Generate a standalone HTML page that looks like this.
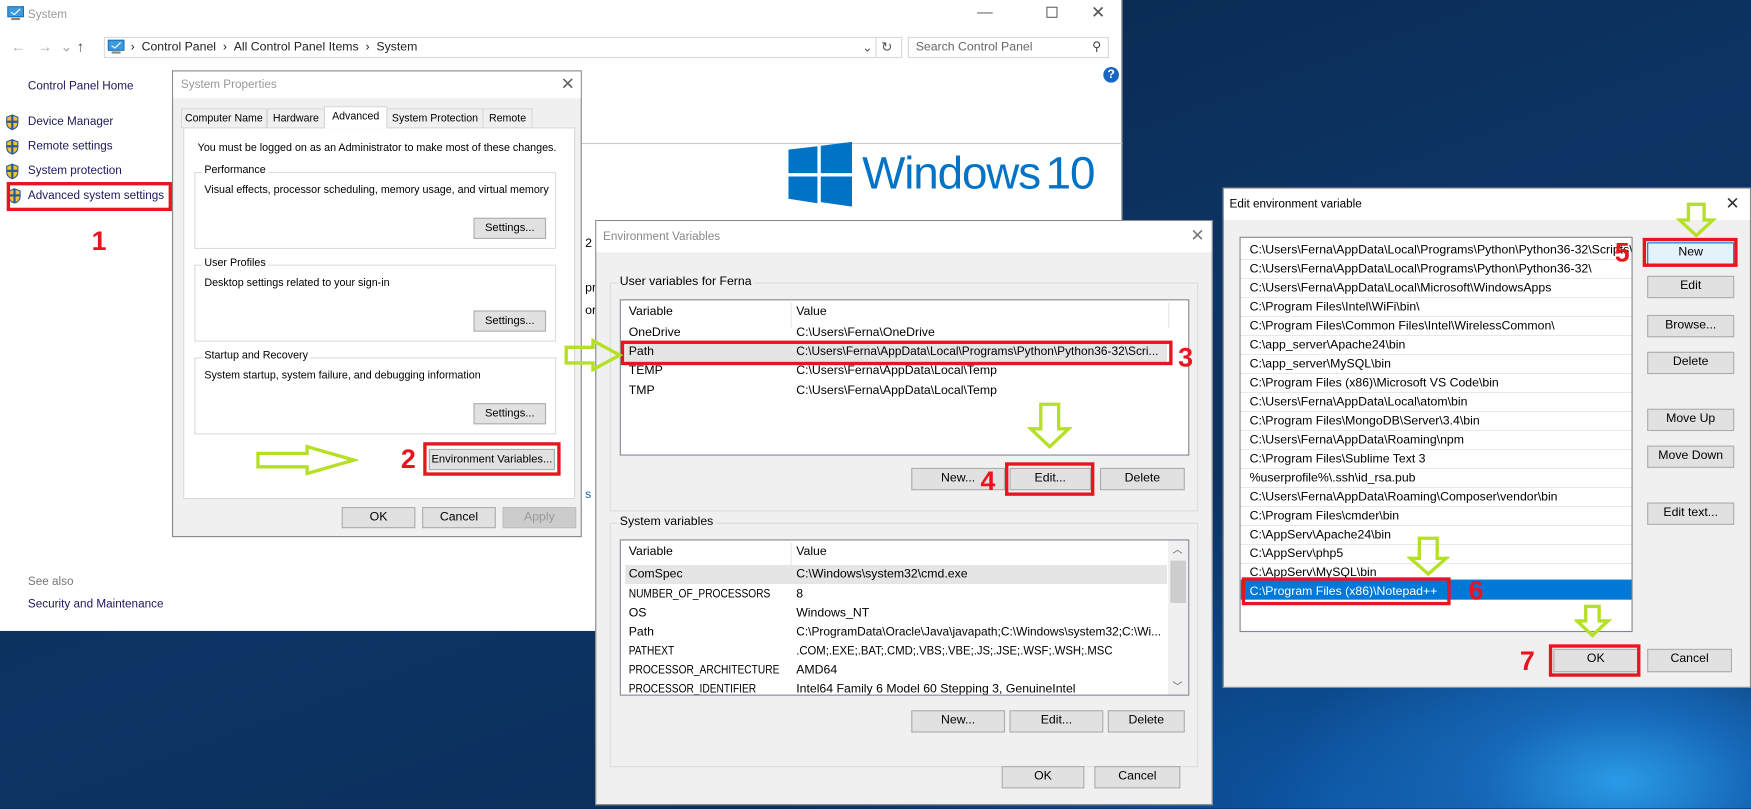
<!DOCTYPE html>
<html><head><meta charset="utf-8"><style>
*{margin:0;padding:0;box-sizing:border-box}
html,body{width:1751px;height:809px;overflow:hidden;background:#0b2a52}
#s{position:absolute;left:0;top:0;width:1568px;height:724px;transform:scale(1.11671);transform-origin:0 0;font-family:"Liberation Sans",sans-serif;font-size:11px;color:#000;
background:radial-gradient(ellipse 300px 160px at 1450px 700px,#2a9be8 0%,#1668b8 40%,rgba(11,42,82,0) 100%),radial-gradient(ellipse 500px 300px at 1200px 720px,#0d57a6 0%,rgba(11,42,82,0) 100%),linear-gradient(160deg,#0a2140 0%,#0c3464 50%,#0a2a55 100%)}
.a{position:absolute;white-space:nowrap}
.btn{position:absolute;background:#e1e1e1;border:1px solid #adadad;text-align:center;line-height:17px;font-size:11px;white-space:nowrap}
.sp .btn,.sp{font-size:10px}
.red{position:absolute;border:3px solid #e8141e}
.num{position:absolute;color:#e8141e;font-weight:bold;font-size:24px;line-height:24px}
.grp{position:absolute;border:1px solid #dcdcdc}
.grp>.l{position:absolute;top:-8px;left:6px;background:inherit;padding:0 2px}
.list{position:absolute;background:#fff;border:1px solid #828790}
.row{position:absolute;left:0;height:17px;line-height:17px;white-space:nowrap}
.c{display:inline-block;transform:scaleX(.83);transform-origin:left}
.x{position:absolute;font-size:15px;color:#555;line-height:15px}
.tab{position:absolute;height:18px;border:1px solid #d9d9d9;background:#f0f0f0;padding:3px 0;text-align:center;font-size:9.5px;white-space:nowrap}
</style></head><body><div id="s">

<!-- System window -->
<div class="a" style="left:0;top:0;width:1005px;height:565px;background:#fff;border-right:1px solid #999"></div>
<svg class="a" style="left:6px;top:5px" width="16" height="14"><rect x="1" y="1" width="14" height="9" fill="#3c9be0" stroke="#1b6fb5"/><path d="M4 6l3 2 5-5" stroke="#fff" fill="none"/><rect x="4" y="11" width="8" height="2" fill="#888"/></svg>
<div class="a" style="left:25px;top:7px;color:#999;font-size:10.5px">System</div>
<div class="a" style="left:875px;top:2px;color:#666;font-size:14px">—</div>
<div class="a" style="left:937px;top:6px;width:10px;height:10px;border:1px solid #666"></div>
<div class="x" style="left:977px;top:4px">✕</div>
<div class="a" style="left:10px;top:34px;color:#aaa;font-size:13px">←&nbsp;&nbsp;&nbsp;→&nbsp;&nbsp;⌄&nbsp;<span style="color:#444">↑</span></div>
<div class="a" style="left:93px;top:33px;width:715px;height:19px;border:1px solid #d9d9d9"></div>
<svg class="a" style="left:96px;top:35px" width="16" height="14"><rect x="1" y="1" width="14" height="9" fill="#3c9be0" stroke="#1b6fb5"/><path d="M4 6l3 2 5-5" stroke="#fff" fill="none"/><rect x="4" y="11" width="8" height="2" fill="#888"/></svg>
<div class="a" style="left:117px;top:36px;color:#222">›&nbsp;&nbsp;Control Panel&nbsp;&nbsp;›&nbsp;&nbsp;All Control Panel Items&nbsp;&nbsp;›&nbsp;&nbsp;System</div>
<div class="a" style="left:772px;top:36px;color:#555">⌄</div>
<div class="a" style="left:784px;top:33px;width:1px;height:19px;background:#d9d9d9"></div>
<div class="a" style="left:789px;top:35px;color:#555;font-size:12px">↻</div>
<div class="a" style="left:813px;top:33px;width:180px;height:19px;border:1px solid #d9d9d9"></div>
<div class="a" style="left:820px;top:36px;color:#666">Search Control Panel</div>
<div class="a" style="left:978px;top:35px;color:#444;font-size:11px">⚲</div>
<div class="a" style="left:988px;top:60px;width:14px;height:14px;border-radius:50%;background:#1a65c0;color:#fff;font-weight:bold;text-align:center;line-height:14px;font-size:11px">?</div>
<div class="a" style="left:25px;top:71px;color:#1a1a5a;font-size:10.5px">Control Panel Home</div>
<div class="a" style="left:25px;top:103px;color:#1a1a5a;font-size:10.5px">Device Manager</div>
<div class="a" style="left:25px;top:125px;color:#1a1a5a;font-size:10.5px">Remote settings</div>
<div class="a" style="left:25px;top:147px;color:#1a1a5a;font-size:10.5px">System protection</div>
<div class="a" style="left:25px;top:169px;color:#1a1a5a;font-size:10.5px">Advanced system settings</div>
<svg class="a" style="left:5px;top:102px" width="14" height="80"><g><path d="M6 1l5 2v5c0 3-2 5-5 6c-3-1-5-3-5-6V3z" fill="#f5c232" stroke="#2b5a9c"/><path d="M6 1v13M1 7h10" stroke="#2b5a9c" stroke-width="2"/></g><g transform="translate(0,22)"><path d="M6 1l5 2v5c0 3-2 5-5 6c-3-1-5-3-5-6V3z" fill="#f5c232" stroke="#2b5a9c"/><path d="M6 1v13M1 7h10" stroke="#2b5a9c" stroke-width="2"/></g><g transform="translate(0,44)"><path d="M6 1l5 2v5c0 3-2 5-5 6c-3-1-5-3-5-6V3z" fill="#f5c232" stroke="#2b5a9c"/><path d="M6 1v13M1 7h10" stroke="#2b5a9c" stroke-width="2"/></g><g transform="translate(2,66)"><path d="M6 1l5 2v5c0 3-2 5-5 6c-3-1-5-3-5-6V3z" fill="#f5c232" stroke="#2b5a9c"/><path d="M6 1v13M1 7h10" stroke="#2b5a9c" stroke-width="2"/></g></svg>
<div class="red" style="left:6px;top:163px;width:148px;height:26px"></div>
<div class="num" style="left:82px;top:205px">1</div>
<div class="a" style="left:25px;top:515px;color:#777;font-size:10.5px">See also</div>
<div class="a" style="left:25px;top:535px;color:#1a1a5a;font-size:10.5px">Security and Maintenance</div>
<div class="a" style="left:520px;top:128px;width:485px;height:1px;background:#ccc"></div>
<svg class="a" style="left:706px;top:127px" width="60" height="58"><path d="M0 7l26-3v24H0z M29 3.5L57 0v28H29z M0 31h26v24L0 51z M29 31h28v27l-28-4z" fill="#0173c7"/></svg>
<div class="a" style="left:772px;top:131px;color:#0173c7;font-size:41px;line-height:48px;letter-spacing:-1px">Windows<span style="margin-left:5px">10</span></div>
<div class="a" style="left:524px;top:212px;font-size:11px">2</div>
<div class="a" style="left:524px;top:252px">pr</div>
<div class="a" style="left:524px;top:272px">or</div>
<div class="a" style="left:524px;top:437px;color:#1a65c0">s</div>

<!-- System Properties -->
<div class="sp">
<div class="a" style="left:154px;top:63px;width:367px;height:418px;background:#f0f0f0;border:1px solid #888"></div>
<div class="a" style="left:155px;top:64px;width:365px;height:24px;background:#fff"></div>
<div class="a" style="left:162px;top:70px;color:#999;font-size:10.5px">System Properties</div>
<div class="x" style="left:502px;top:68px;color:#666">✕</div>
<div class="a" style="left:164px;top:114px;width:351px;height:333px;background:#fff;border:1px solid #d9d9d9"></div>
<div class="tab" style="left:162px;top:97px;width:77px">Computer Name</div>
<div class="tab" style="left:239px;top:97px;width:52px">Hardware</div>
<div class="tab" style="left:290px;top:95px;height:20px;width:57px;border-bottom:none;background:#fff">Advanced</div>
<div class="tab" style="left:346px;top:97px;width:87px">System Protection</div>
<div class="tab" style="left:432px;top:97px;width:45px">Remote</div>
<div class="a" style="left:177px;top:127px;font-size:9.6px">You must be logged on as an Administrator to make most of these changes.</div>
<div class="grp" style="left:174px;top:154px;width:324px;height:69px;background:#fff"><span class="l" style="font-size:9.6px">Performance</span></div>
<div class="a" style="left:183px;top:165px;font-size:9.6px">Visual effects, processor scheduling, memory usage, and virtual memory</div>
<div class="btn" style="left:424px;top:195px;width:65px;height:19px">Settings...</div>
<div class="grp" style="left:174px;top:237px;width:324px;height:69px;background:#fff"><span class="l" style="font-size:9.6px">User Profiles</span></div>
<div class="a" style="left:183px;top:248px;font-size:9.6px">Desktop settings related to your sign-in</div>
<div class="btn" style="left:424px;top:278px;width:65px;height:19px">Settings...</div>
<div class="grp" style="left:174px;top:320px;width:324px;height:69px;background:#fff"><span class="l" style="font-size:9.6px">Startup and Recovery</span></div>
<div class="a" style="left:183px;top:331px;font-size:9.6px">System startup, system failure, and debugging information</div>
<div class="btn" style="left:424px;top:361px;width:65px;height:19px">Settings...</div>
<div class="btn" style="left:384px;top:402px;width:113px;height:19px">Environment Variables...</div>
<div class="red" style="left:379px;top:396px;width:123px;height:30px"></div>
<div class="num" style="left:359px;top:400px">2</div>
<svg class="a" style="left:229px;top:398px" width="92" height="28"><path d="M2 8h44V2l42 12-42 12v-6H2z" fill="none" stroke="#b5e026" stroke-width="3"/></svg>
<div class="btn" style="left:306px;top:454px;width:66px;height:19px;font-size:11px">OK</div>
<div class="btn" style="left:378px;top:454px;width:66px;height:19px;font-size:11px">Cancel</div>
<div class="btn" style="left:450px;top:454px;width:66px;height:19px;color:#999;background:#ccc;border-color:#bfbfbf;font-size:11px">Apply</div>
</div>

<!-- Environment Variables -->
<div class="a" style="left:533px;top:197px;width:553px;height:524px;background:#f0f0f0;border:1px solid #888"></div>
<div class="a" style="left:534px;top:198px;width:551px;height:28px;background:#fff"></div>
<div class="a" style="left:540px;top:206px;color:#888;font-size:10.5px">Environment Variables</div>
<div class="x" style="left:1066px;top:204px;color:#777">✕</div>
<div class="grp" style="left:546px;top:253px;width:527px;height:205px;background:#f0f0f0"><span class="l">User variables for Ferna</span></div>
<div class="list" style="left:555px;top:268px;width:510px;height:140px">
 <div class="a" style="left:152px;top:2px;width:1px;height:23px;background:#e5e5e5"></div>
 <div class="a" style="left:490px;top:2px;width:1px;height:23px;background:#e5e5e5"></div>
 <div class="row" style="top:2px;left:7px">Variable</div><div class="row" style="top:2px;left:157px">Value</div>
 <div class="row" style="top:21px;left:7px">OneDrive</div><div class="row" style="top:21px;left:157px">C:\Users\Ferna\OneDrive</div>
 <div class="row" style="top:38px;left:4px;width:485px;background:#e5e5e5"></div>
 <div class="row" style="top:38px;left:7px">Path</div><div class="row" style="top:38px;left:157px"><span class="c" style="transform:scaleX(.97)">C:\Users\Ferna\AppData\Local\Programs\Python\Python36-32\Scri...</span></div>
 <div class="row" style="top:55px;left:7px">TEMP</div><div class="row" style="top:55px;left:157px">C:\Users\Ferna\AppData\Local\Temp</div>
 <div class="row" style="top:73px;left:7px">TMP</div><div class="row" style="top:73px;left:157px">C:\Users\Ferna\AppData\Local\Temp</div>
</div>
<div class="red" style="left:556px;top:305px;width:494px;height:22px"></div>
<div class="num" style="left:1055px;top:309px">3</div>
<svg class="a" style="left:505px;top:303px" width="54" height="30"><path d="M2 8h24V2l24 13-24 13v-6H2z" fill="none" stroke="#b5e026" stroke-width="3"/></svg>
<svg class="a" style="left:920px;top:360px" width="40" height="42"><path d="M12 2h16v22h9L20 40 3 24h9z" fill="none" stroke="#b5e026" stroke-width="3"/></svg>
<div class="btn" style="left:816px;top:419px;width:84px;height:20px">New...</div>
<div class="btn" style="left:904px;top:419px;width:73px;height:20px">Edit...</div>
<div class="red" style="left:900px;top:414px;width:80px;height:30px"></div>
<div class="num" style="left:878px;top:420px">4</div>
<div class="btn" style="left:985px;top:419px;width:76px;height:20px">Delete</div>
<div class="grp" style="left:546px;top:468px;width:527px;height:219px;background:#f0f0f0"><span class="l">System variables</span></div>
<div class="list" style="left:555px;top:483px;width:510px;height:140px;overflow:hidden">
 <div class="a" style="left:152px;top:2px;width:1px;height:23px;background:#e5e5e5"></div>
 <div class="a" style="left:490px;top:0;width:18px;height:138px;background:#f0f0f0"></div>
 <div class="a" style="left:492px;top:18px;width:14px;height:38px;background:#cdcdcd"></div>
 <div class="a" style="left:494px;top:1px;color:#555;font-size:9px">︿</div>
 <div class="a" style="left:494px;top:124px;color:#555;font-size:9px">﹀</div>
 <div class="row" style="top:2px;left:7px">Variable</div><div class="row" style="top:2px;left:157px">Value</div>
 <div class="row" style="top:22px;left:4px;width:485px;background:#e5e5e5"></div>
 <div class="row" style="top:22px;left:7px">ComSpec</div><div class="row" style="top:22px;left:157px">C:\Windows\system32\cmd.exe</div>
 <div class="row" style="top:40px;left:7px"><span class="c">NUMBER_OF_PROCESSORS</span></div><div class="row" style="top:40px;left:157px">8</div>
 <div class="row" style="top:57px;left:7px">OS</div><div class="row" style="top:57px;left:157px">Windows_NT</div>
 <div class="row" style="top:74px;left:7px">Path</div><div class="row" style="top:74px;left:157px"><span class="c" style="transform:scaleX(.97)">C:\ProgramData\Oracle\Java\javapath;C:\Windows\system32;C:\Wi...</span></div>
 <div class="row" style="top:91px;left:7px"><span class="c">PATHEXT</span></div><div class="row" style="top:91px;left:157px"><span class="c" style="transform:scaleX(.92)">.COM;.EXE;.BAT;.CMD;.VBS;.VBE;.JS;.JSE;.WSF;.WSH;.MSC</span></div>
 <div class="row" style="top:108px;left:7px"><span class="c">PROCESSOR_ARCHITECTURE</span></div><div class="row" style="top:108px;left:157px">AMD64</div>
 <div class="row" style="top:125px;left:7px"><span class="c">PROCESSOR_IDENTIFIER</span></div><div class="row" style="top:125px;left:157px">Intel64 Family 6 Model 60 Stepping 3, GenuineIntel</div>
</div>
<div class="btn" style="left:816px;top:636px;width:84px;height:20px">New...</div>
<div class="btn" style="left:904px;top:636px;width:84px;height:20px">Edit...</div>
<div class="btn" style="left:992px;top:636px;width:69px;height:20px">Delete</div>
<div class="btn" style="left:897px;top:686px;width:74px;height:20px">OK</div>
<div class="btn" style="left:980px;top:686px;width:77px;height:20px">Cancel</div>

<!-- Edit environment variable -->
<div class="a" style="left:1095px;top:168px;width:473px;height:448px;background:#f0f0f0;border:1px solid #888"></div>
<div class="a" style="left:1096px;top:169px;width:471px;height:28px;background:#fff"></div>
<div class="a" style="left:1101px;top:177px;font-size:10.5px">Edit environment variable</div>
<div class="x" style="left:1545px;top:175px;color:#333">✕</div>
<div class="list" style="left:1110px;top:212px;width:352px;height:354px;overflow:hidden">
 <div style="position:absolute;left:0;top:3px;width:350px;background:repeating-linear-gradient(#fff 0,#fff 16px,#e8e8e8 16px,#e8e8e8 17px);height:306px"></div>
 <div class="row" style="top:306px;left:0;width:350px;height:18px;background:#0078d7"></div>
 <div style="position:absolute;left:8px;top:3px;line-height:17px;font-size:11px;white-space:pre">C:\Users\Ferna\AppData\Local\Programs\Python\Python36-32\Scripts\
C:\Users\Ferna\AppData\Local\Programs\Python\Python36-32\
C:\Users\Ferna\AppData\Local\Microsoft\WindowsApps
C:\Program Files\Intel\WiFi\bin\
C:\Program Files\Common Files\Intel\WirelessCommon\
C:\app_server\Apache24\bin
C:\app_server\MySQL\bin
C:\Program Files (x86)\Microsoft VS Code\bin
C:\Users\Ferna\AppData\Local\atom\bin
C:\Program Files\MongoDB\Server\3.4\bin
C:\Users\Ferna\AppData\Roaming\npm
C:\Program Files\Sublime Text 3
%userprofile%\.ssh\id_rsa.pub
C:\Users\Ferna\AppData\Roaming\Composer\vendor\bin
C:\Program Files\cmder\bin
C:\AppServ\Apache24\bin
C:\AppServ\php5
C:\AppServ\MySQL\bin
<span style="color:#fff">C:\Program Files (x86)\Notepad++</span></div>
</div>
<div class="red" style="left:1112px;top:517px;width:187px;height:25px"></div>
<div class="num" style="left:1315px;top:518px">6</div>
<svg class="a" style="left:1260px;top:480px" width="38" height="36"><path d="M11 2h16v18h8L19 34 3 20h8z" fill="none" stroke="#b5e026" stroke-width="3"/></svg>
<div class="btn" style="left:1475px;top:217px;width:78px;height:20px;background:#e5f1fb;border-color:#0078d7">New</div>
<div class="red" style="left:1471px;top:213px;width:85px;height:26px"></div>
<div class="num" style="left:1446px;top:215px">5</div>
<svg class="a" style="left:1501px;top:181px" width="36" height="32"><path d="M11 2h14v14h8L18 30 3 16h8z" fill="none" stroke="#b5e026" stroke-width="3"/></svg>
<div class="btn" style="left:1475px;top:247px;width:78px;height:20px">Edit</div>
<div class="btn" style="left:1475px;top:282px;width:78px;height:20px">Browse...</div>
<div class="btn" style="left:1475px;top:315px;width:78px;height:20px">Delete</div>
<div class="btn" style="left:1475px;top:366px;width:78px;height:20px">Move Up</div>
<div class="btn" style="left:1475px;top:399px;width:78px;height:20px">Move Down</div>
<div class="btn" style="left:1475px;top:450px;width:78px;height:20px">Edit text...</div>
<div class="btn" style="left:1391px;top:581px;width:76px;height:21px">OK</div>
<div class="red" style="left:1387px;top:577px;width:82px;height:29px"></div>
<div class="num" style="left:1361px;top:581px">7</div>
<svg class="a" style="left:1410px;top:541px" width="34" height="30"><path d="M10 2h12v13h8L16 28 2 15h8z" fill="none" stroke="#b5e026" stroke-width="3"/></svg>
<div class="btn" style="left:1475px;top:581px;width:76px;height:21px">Cancel</div>

</div></body></html>
